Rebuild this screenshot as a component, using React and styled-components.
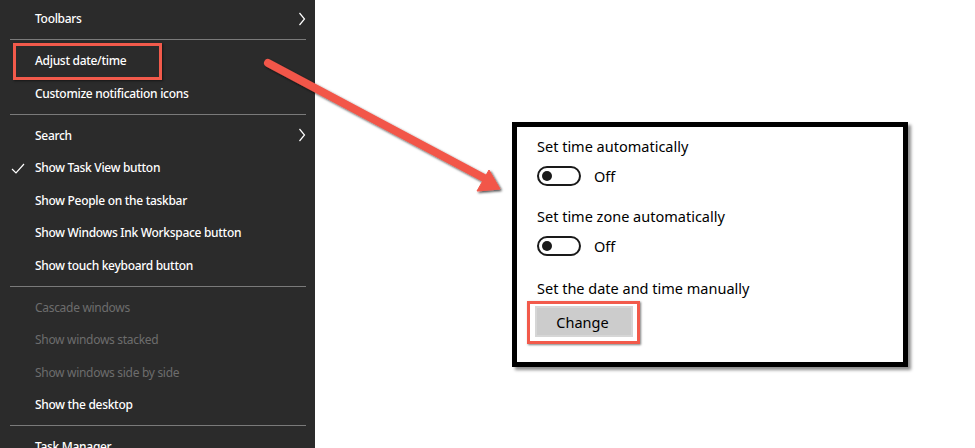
import React from 'react';
import styled, { createGlobalStyle } from 'styled-components';

const GlobalStyle = createGlobalStyle`
  html, body {
    margin: 0;
    padding: 0;
    background: #ffffff;
    overflow: hidden;
  }
`;

const Page = styled.div`
  position: relative;
  width: 975px;
  height: 448px;
  display: flex;
  background: #ffffff;
  overflow: hidden;
`;

const Menu = styled.div`
  width: 315px;
  height: 100%;
  flex-shrink: 0;
  background: #2b2b2b;
  padding-top: 2.5px;
  box-sizing: border-box;
  font-family: 'Noto Sans', 'Open Sans', sans-serif;
  font-size: 12px;
  letter-spacing: -0.3px;
`;

const Item = styled.div`
  position: relative;
  height: 32.5px;
  display: flex;
  align-items: center;
  padding-left: 35px;
  color: ${(p) => (p.$disabled ? '#6d6d6d' : '#ffffff')};
  font-weight: ${(p) => (p.$disabled ? 400 : 500)};

  ${(p) =>
    p.$highlight &&
    `
    &::before {
      content: '';
      position: absolute;
      left: 13px;
      top: -2px;
      width: 149px;
      height: 37px;
      box-sizing: border-box;
      border: 3.5px solid #f25a4b;
      box-shadow: 1px 1px 2px rgba(0, 0, 0, 0.5);
    }
  `}
`;

const Check = styled.svg`
  position: absolute;
  left: 11px;
  top: 10px;
`;

const Chevron = styled.svg`
  position: absolute;
  left: 298px;
  top: 9px;
`;

const Separator = styled.div`
  height: 9.5px;
  display: flex;
  align-items: center;
  padding: 0 9px 0 10px;

  &::after {
    content: '';
    flex: 1;
    height: 1px;
    background: #7a7a7a;
  }
`;

const Stage = styled.div`
  flex: 1;
  padding: 122px 0 0 197px;
  box-sizing: border-box;
`;

const Panel = styled.div`
  width: 396px;
  height: 245px;
  box-sizing: border-box;
  border: 5px solid #000000;
  box-shadow: 3px 3px 3px rgba(0, 0, 0, 0.45);
  background: #ffffff;
  padding: 9px 0 0 20px;
  font-family: 'Noto Sans', 'Open Sans', sans-serif;
  font-size: 14.5px;
  color: #000000;
  display: flex;
  flex-direction: column;
  align-items: flex-start;
`;

const Heading = styled.div`
  height: 20px;
  line-height: 20px;
  margin-top: ${(p) => p.$gap || 0}px;
`;

const ToggleRow = styled.div`
  display: flex;
  align-items: center;
  gap: 13px;
  margin-top: 10px;
  height: 20px;
`;

const Track = styled.div`
  width: 44px;
  height: 20px;
  box-sizing: border-box;
  border: 2px solid #1a1a1a;
  border-radius: 10px;
  display: flex;
  align-items: center;
  padding-left: 3px;

  &::before {
    content: '';
    width: 10px;
    height: 10px;
    border-radius: 50%;
    background: #1a1a1a;
  }
`;

const ButtonWrap = styled.div`
  position: relative;
  margin-top: 8px;
  margin-left: -2px;

  &::after {
    content: '';
    position: absolute;
    left: -8px;
    top: -5px;
    right: -7px;
    bottom: -7px;
    border: 3.5px solid #f25a4b;
    box-shadow: 1px 1px 2px rgba(0, 0, 0, 0.5);
  }
`;

const Button = styled.div`
  width: 98px;
  height: 31px;
  box-sizing: border-box;
  background: #cccccc;
  border: 2px solid #d6d6d6;
  display: flex;
  align-items: center;
  justify-content: center;
  padding-right: 3px;
  font-size: 14.5px;
`;

const Arrow = styled.svg`
  position: absolute;
  left: 0;
  top: 0;
  pointer-events: none;
`;

const menu = [
  { label: 'Toolbars', sub: true },
  'sep',
  { label: 'Adjust date/time', highlight: true },
  { label: 'Customize notification icons' },
  'sep',
  { label: 'Search', sub: true },
  { label: 'Show Task View button', checked: true },
  { label: 'Show People on the taskbar' },
  { label: 'Show Windows Ink Workspace button' },
  { label: 'Show touch keyboard button' },
  'sep',
  { label: 'Cascade windows', disabled: true },
  { label: 'Show windows stacked', disabled: true },
  { label: 'Show windows side by side', disabled: true },
  { label: 'Show the desktop' },
  'sep',
  { label: 'Task Manager' },
];

const Toggle = () => (
  <ToggleRow>
    <Track />
    <span>Off</span>
  </ToggleRow>
);

const App = () => {
  return (
    <Page>
      <GlobalStyle />
      <Menu>
        {menu.map((m, i) =>
          m === 'sep' ? (
            <Separator key={i} />
          ) : (
            <Item key={i} $disabled={m.disabled} $highlight={m.highlight}>
              {m.checked && (
                <Check width="14" height="12" viewBox="0 0 14 12">
                  <path d="M1 7 L5 11 L13 2" fill="none" stroke="#ffffff" strokeWidth="1.2" />
                </Check>
              )}
              {m.label}
              {m.sub && (
                <Chevron width="8" height="14" viewBox="0 0 8 14">
                  <path d="M1.5 1 L6.5 7 L1.5 13" fill="none" stroke="#ffffff" strokeWidth="1.2" />
                </Chevron>
              )}
            </Item>
          )
        )}
      </Menu>
      <Stage>
        <Panel>
          <Heading>Set time automatically</Heading>
          <Toggle />
          <Heading $gap={20}>Set time zone automatically</Heading>
          <Toggle />
          <Heading $gap={22}>Set the date and time manually</Heading>
          <ButtonWrap>
            <Button>Change</Button>
          </ButtonWrap>
        </Panel>
      </Stage>
      <Arrow width="975" height="448" viewBox="0 0 975 448">
        <defs>
          <filter id="shadow" x="-10%" y="-10%" width="130%" height="130%">
            <feDropShadow dx="1.5" dy="1.5" stdDeviation="1.2" floodColor="#000" floodOpacity="0.7" />
          </filter>
        </defs>
        <g filter="url(#shadow)" fill="#f2564a" stroke="#f2564a">
          <line x1="268" y1="63" x2="484" y2="178" strokeWidth="8" strokeLinecap="round" />
          <polygon points="500,189 477,191 489,170" strokeWidth="1" strokeLinejoin="round" />
        </g>
      </Arrow>
    </Page>
  );
};

export default App;
